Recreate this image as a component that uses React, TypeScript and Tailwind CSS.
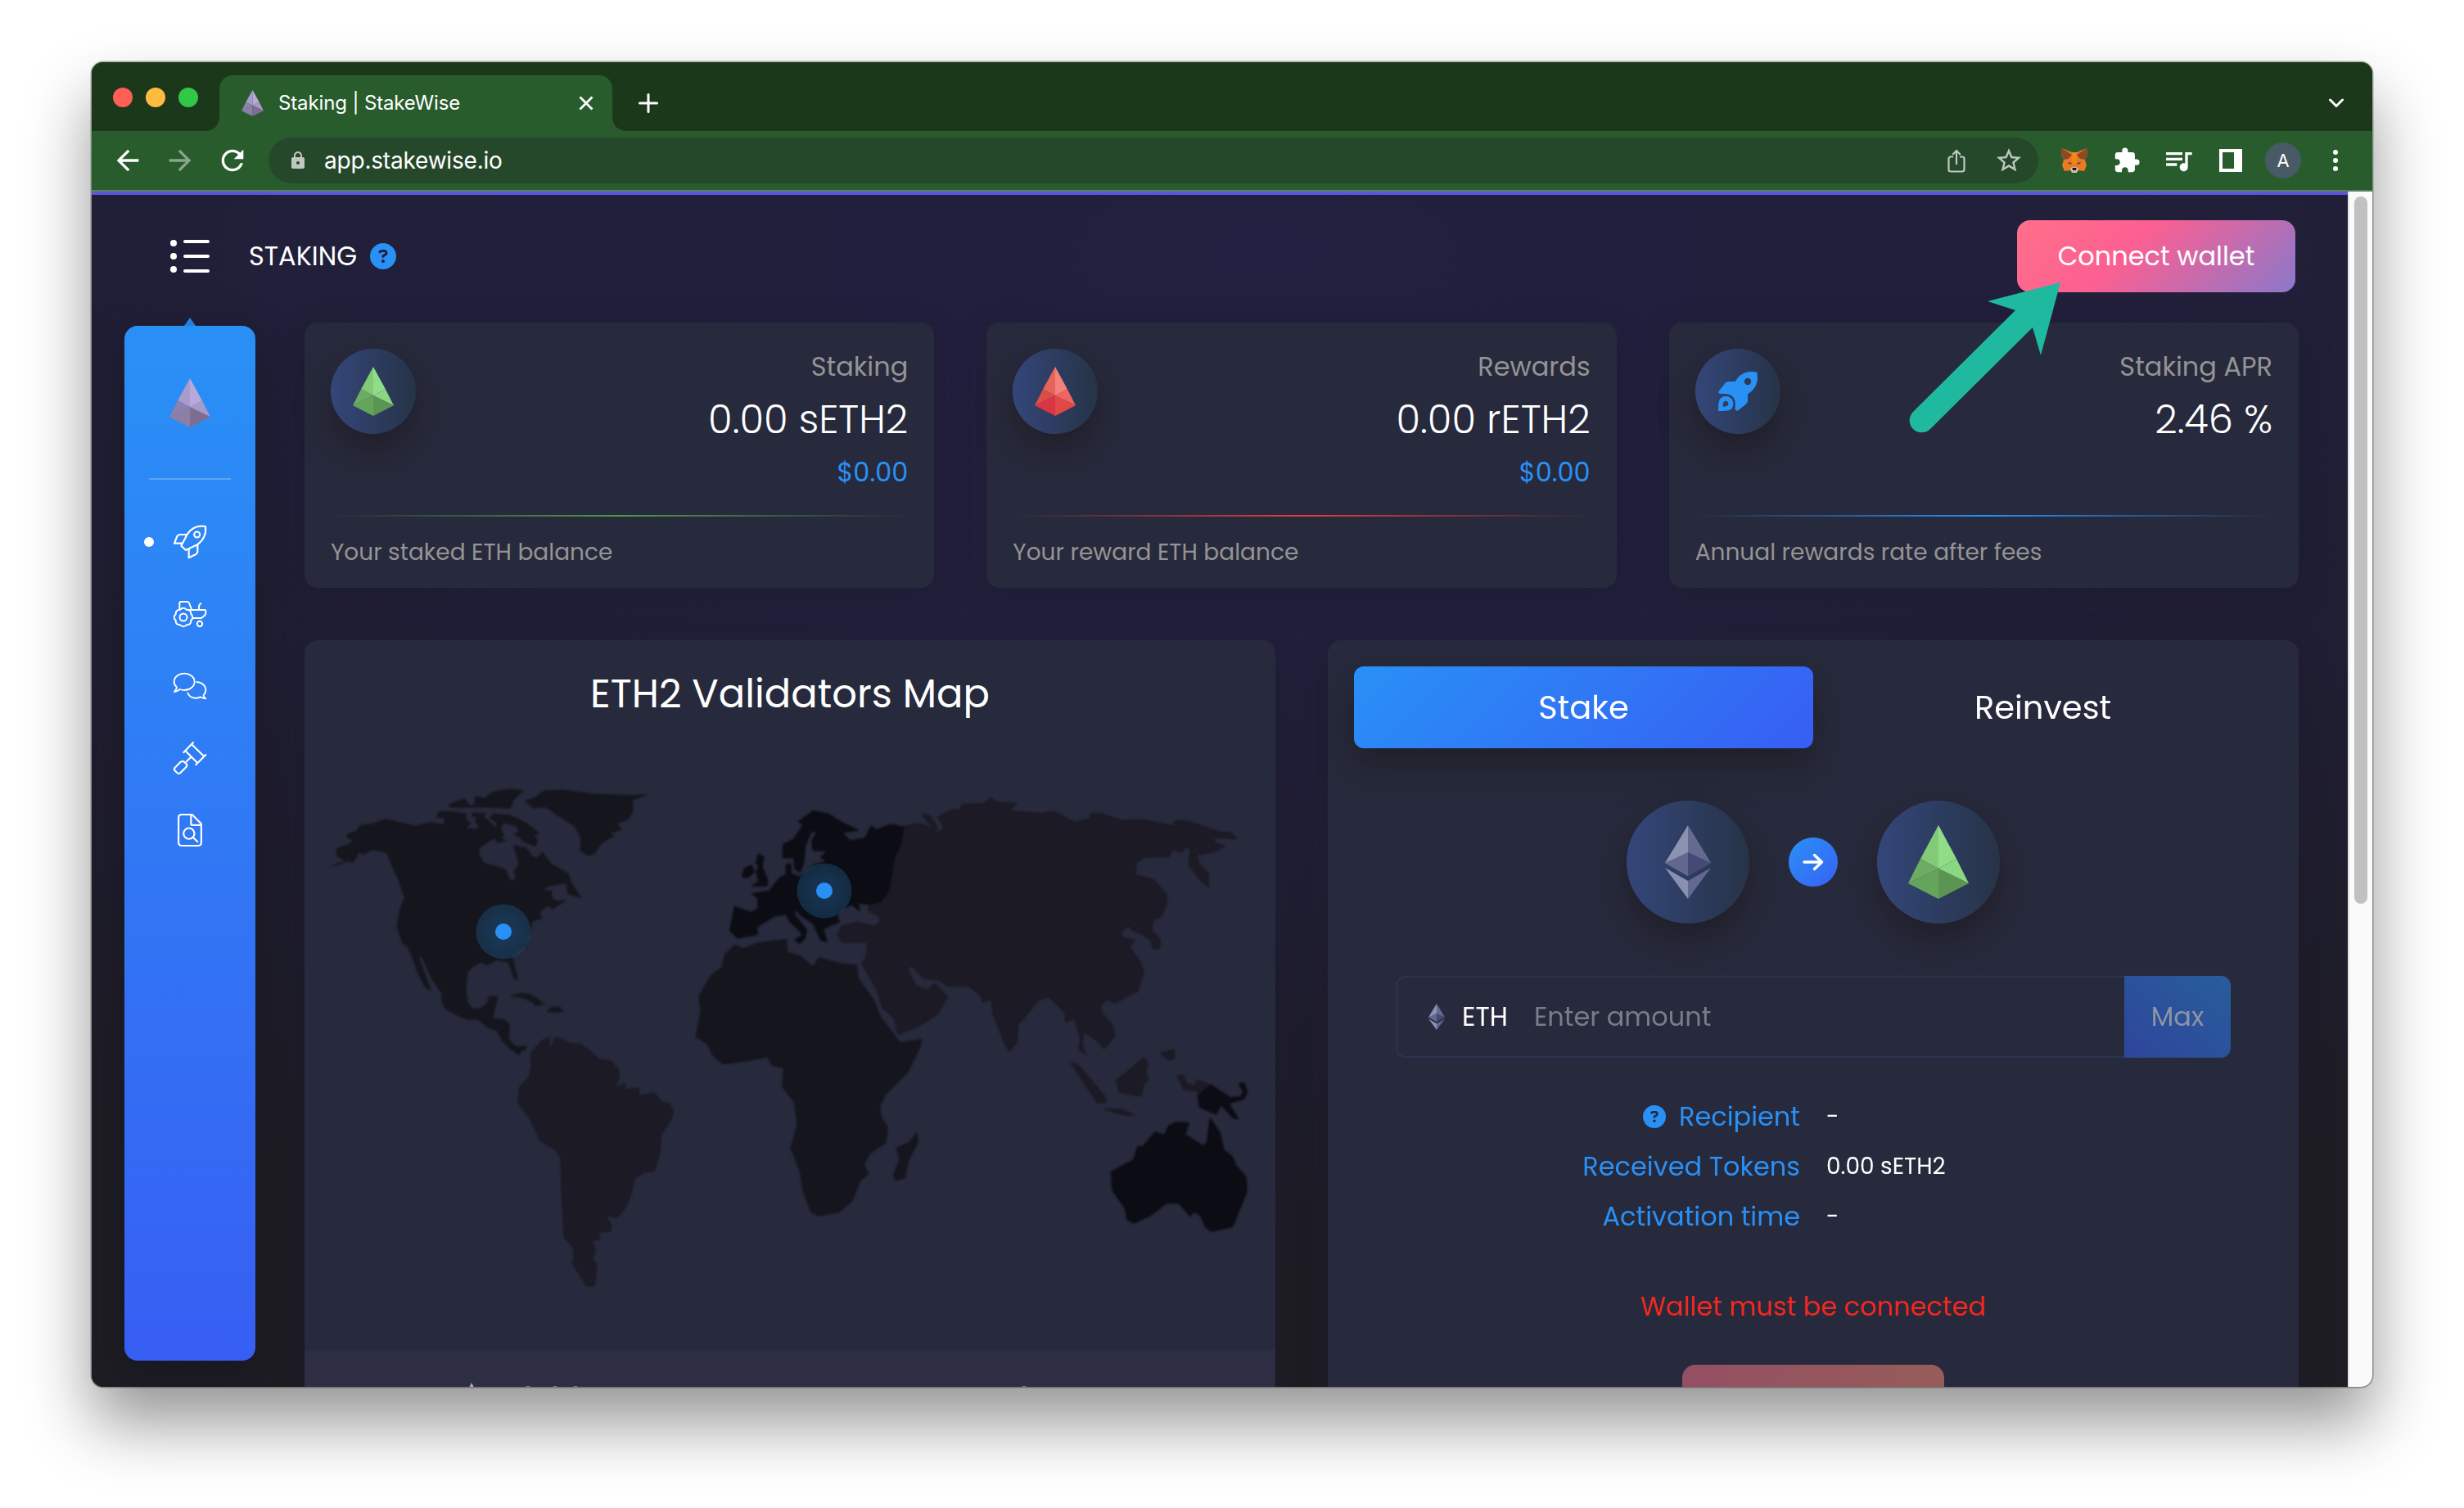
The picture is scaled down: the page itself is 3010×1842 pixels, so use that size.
import React from 'react';
import { MdArrowBack, MdArrowForward, MdExtension, MdLock, MdQueueMusic, MdRefresh, MdStarBorder } from 'react-icons/md';
import { FaCircleQuestion } from 'react-icons/fa6';

type Palette = { ul: string; ur: string; l: string; r: string; bl: string; br: string };

const GREEN: Palette = { ul: '#82ca77', ur: '#90dd88', l: '#6dad63', r: '#8ad681', bl: '#65a45b', br: '#5c9553' };
const RED: Palette = { ul: '#e5655b', ur: '#f4827a', l: '#dc4d4a', r: '#f16561', bl: '#d93542', br: '#e24847' };
const PURPLE: Palette = { ul: '#a89ccc', ur: '#b8a9da', l: '#8d82ad', r: '#a999c6', bl: '#8c7fa3', br: '#7d6d92' };

function Pyramid({ colors, className }: { colors: Palette; className: string }) {
  return (
    <svg viewBox="0 0 74 90" preserveAspectRatio="none" className={className} aria-hidden="true">
      <polygon points="37,0 15,41 37,53" fill={colors.ul} />
      <polygon points="37,0 59,41 37,53" fill={colors.ur} />
      <polygon points="15,41 0,71 37,53" fill={colors.l} />
      <polygon points="59,41 74,71 37,53" fill={colors.r} />
      <polygon points="0,71 37,90 37,53" fill={colors.bl} />
      <polygon points="74,71 37,90 37,53" fill={colors.br} />
    </svg>
  );
}

function EthLogo({ className }: { className: string }) {
  return (
    <svg viewBox="0 0 56 90" className={className} aria-hidden="true">
      <polygon points="28,0 0,46 28,62" fill="#8c92b1" />
      <polygon points="28,0 56,46 28,62" fill="#666a90" />
      <polygon points="28,33 0,46 28,62" fill="#62678f" />
      <polygon points="28,33 56,46 28,62" fill="#454a75" />
      <polygon points="0,52 28,68 28,90" fill="#8a90b0" />
      <polygon points="56,52 28,68 28,90" fill="#62688f" />
    </svg>
  );
}

function RocketSolid() {
  return (
    <svg viewBox="0 0 48 48" className="size-12 fill-[#2990f6]" fillRule="evenodd" aria-hidden="true">
      <path d="M46.500 .6C34-1.500 26 3 20.700 12H12.500Q9.500 12 8 14.500L.5 24Q-.5 27 2.500 27H9Q20.500 28 20.700 39V45.500Q21 48.500 24 47.500L33.500 40Q36 38.500 36 35.500V27.500C45 21.500 49.500 14 47.400 1.500Q47.300 .8 46.500 .6ZM36 7.800A4.200 4.200 0 1 1 36 16.200A4.200 4.200 0 1 1 36 7.800Z" />
      <path d="M0 48C0 40 .5 34.500 3.500 32C8 28.500 14 30 17 34C19 38 18.500 43 16 45.500C13 48 7 48 0 48ZM5.500 42.700C9 42.800 11 42.300 12 41C13 39 12.300 37 10.500 36C8.500 35.300 6.800 36 6.200 38C5.700 39.500 5.500 41 5.500 42.700Z" />
    </svg>
  );
}

function Fox() {
  return (
    <svg viewBox="0 0 32 30" className="h-[30px] w-8" aria-hidden="true">
      <polygon points="1,0 13,5 19,5 31,0 32,9 29,14 31,21 28,28 21,27 18,30 14,30 11,27 4,28 1,21 3,14 0,9" fill="#e87a24" />
      <polygon points="1,0 13,8 9,13 3,14 0,9" fill="#8c4a24" />
      <polygon points="31,0 19,8 23,13 29,14 32,9" fill="#8c4a24" />
      <polygon points="13,5 19,5 18,19 14,19" fill="#f6851b" />
      <polygon points="8,17 13,18 12,20 9,19" fill="#6a4632" />
      <polygon points="24,17 19,18 20,20 23,19" fill="#6a4632" />
      <polygon points="11,25 14,23 18,23 21,25 19,30 13,30" fill="#d5bfb2" />
      <polygon points="13.500,24 18.500,24 18,27 14,27" fill="#161616" />
    </svg>
  );
}

function ShareIcon() {
  return (
    <svg viewBox="0 0 22 29" className="h-[29px] w-[22px]" fill="none" stroke="#bfc8c0" strokeWidth="2.2" aria-hidden="true">
      <path d="M7 9.500H4a2.500 2.500 0 0 0-2.500 2.500v13A2.500 2.500 0 0 0 4 27.500h14a2.500 2.500 0 0 0 2.500-2.500V12A2.500 2.500 0 0 0 18 9.500h-3" />
      <path d="M11 19V2.500M6.200 7 11 2l4.800 5" />
    </svg>
  );
}

const navIcon = 'overflow-visible fill-none stroke-white';

function RocketOutline() {
  return (
    <svg viewBox="126 66 120 120" className={`${navIcon} size-10`} strokeWidth="6.500" strokeLinejoin="round">
      <path d="M243 69C210 64 188 79 176 98L154 140l17 16 42-20C234 121 247 102 243 69Z" />
      <circle cx="212" cy="99" r="10.500" />
      <path d="M175 99h-25q-8 0-11 6l-10 26h29M182 151v33l25-12q7-4 7-11v-26" />
    </svg>
  );
}

function TractorOutline() {
  return (
    <svg viewBox="126 342 120 96" className={`${navIcon} h-8 w-10`} strokeWidth="6" strokeLinejoin="round" strokeLinecap="round">
      <path d="M148 374v-24q0-5 5-5h23q5 0 7 5l10 25M176 375h64q4 0 4 4v9q0 4-4 7l-12 10h-32M219 375v-10q0-10 7-14" />
      <circle cx="162" cy="402" r="13.500" />
      <path d="M189.700 390.500A14 14 0 0 1 189.700 413.500A14 14 0 0 1 173.500 429.700A14 14 0 0 1 150.500 429.700A14 14 0 0 1 134.300 413.500A14 14 0 0 1 134.300 390.500A14 14 0 0 1 150.500 374.300A14 14 0 0 1 173.500 374.300A14 14 0 0 1 189.700 390.500Z" />
      <circle cx="222" cy="426" r="9.500" />
    </svg>
  );
}

function ChatOutline() {
  return (
    <svg viewBox="126 606 120 96" className={`${navIcon} h-8 w-10`} strokeWidth="5.500" strokeLinejoin="round" strokeLinecap="round">
      <path d="M138 658C131 652 128 645 128 638C128 621 145 608 165.500 608C186 608 203 621 203 638C203 655 186 669 165.500 669C160 669 154 668 149 666C143 671 137 675 129 675C134 669 138 664 138 658Z" />
      <path d="M211 639C230 640 244 652 244 669C244 676 241 682 236 687C236 692 239 697 244 700C236 700 230 697 224 694C205 703 184 697 178 679" />
    </svg>
  );
}

function GavelOutline() {
  return (
    <svg viewBox="126 858 120 120" className={`${navIcon} size-10`} strokeWidth="6.500" strokeLinejoin="round" strokeLinecap="round">
      <path d="M163 897 198 861M208 942l36-36M169 891l45 45M192 867l46 45M190 914l-17 17" />
      <path d="M151 933l-20 20q-5 6 0 11l8 8q6 5 12 0l21-21q6-6 1-12l-9-8q-6-4-13 2Z" />
    </svg>
  );
}

function DocSearchOutline() {
  return (
    <svg viewBox="141 1121 90 121" className={`${navIcon} h-10 w-[30px]`} strokeWidth="6.500" strokeLinejoin="round" strokeLinecap="round">
      <path d="M156 1124h38l34 34v69q0 12-12 12h-60q-12 0-12-12v-91q0-12 12-12ZM190 1125v33q0 5 5 5h32" />
      <circle cx="182.500" cy="1194" r="20" />
      <path d="m197 1208 17 16" />
    </svg>
  );
}

function BrowserChrome() {
  return (
    <header className="font-['Inter',sans-serif] text-white">
      <div className="flex h-[84px] bg-[#1b381b]">
        <div className="flex w-[156px] gap-4 pt-[31px] pl-[26px]">
          <span className="size-6 rounded-full bg-[#fe5f57]" />
          <span className="size-6 rounded-full bg-[#febb40]" />
          <span className="size-6 rounded-full bg-[#33c748]" />
        </div>
        <div className="relative mt-4 flex h-[68px] w-[480px] items-center rounded-t-2xl bg-[#295c2c] pl-[27px]">
          <span className="absolute bottom-0 -left-4 size-4 bg-[radial-gradient(circle_at_0_0,transparent_15.5px,#295c2c_16px)]" />
          <span className="absolute -right-4 bottom-0 size-4 bg-[radial-gradient(circle_at_100%_0,transparent_15.5px,#295c2c_16px)]" />
          <Pyramid colors={PURPLE} className="h-8 w-[27px]" />
          <span className="ml-[18px] text-2xl tracking-[-0.13px]">Staking | StakeWise</span>
          <svg viewBox="0 0 18 18" className="mr-[23px] ml-auto size-[18px] fill-none stroke-white" strokeWidth="2.800">
            <path d="m1.500 1.500 15 15m0-15-15 15" />
          </svg>
        </div>
        <svg viewBox="0 0 24 24" className="mt-[38px] ml-8 size-6 fill-none stroke-white" strokeWidth="3" strokeLinecap="round">
          <path d="M12 1.500v21M1.500 12h21" />
        </svg>
        <svg viewBox="0 0 18 12" className="mt-11 mr-[35px] ml-auto h-3 w-[18px] fill-none stroke-white" strokeWidth="3" strokeLinecap="round">
          <path d="m1.500 2 7.500 7.500L16.500 2" />
        </svg>
      </div>
      <div className="flex h-[72px] items-center bg-[#295c2c]">
        <MdArrowBack className="ml-6 size-10" />
        <MdArrowForward className="ml-6 size-10 opacity-45" />
        <MdRefresh className="ml-6 size-10" />
        <div className="ml-6 flex h-14 w-[2162px] items-center rounded-full bg-[#26482a] pl-6 text-[#bfc8c0]">
          <MdLock className="size-6" />
          <span className="ml-5 text-[28px] tracking-[-0.2px] text-white">app.stakewise.io</span>
          <span className="ml-auto">
            <ShareIcon />
          </span>
          <MdStarBorder className="mr-[18px] ml-[35px] size-[36px]" />
        </div>
        <span className="ml-7">
          <Fox />
        </span>
        <MdExtension className="ml-[31px] size-[34px]" />
        <MdQueueMusic className="ml-[26px] size-10" />
        <span className="ml-[30px] box-border h-7 w-7 border-4 border-r-10 border-white" />
        <span className="ml-7 flex size-11 items-center justify-center rounded-full bg-[#485a65] text-[22px]">A</span>
        <svg viewBox="0 0 6 28" className="ml-[39px] h-7 w-1.5 fill-white">
          <circle cx="3" cy="4" r="3" />
          <circle cx="3" cy="14" r="3" />
          <circle cx="3" cy="24" r="3" />
        </svg>
      </div>
      <div className="h-0.5 bg-[#5c815e]" />
    </header>
  );
}

const NAV = [
  { icon: <RocketOutline />, active: true },
  { icon: <TractorOutline />, active: false },
  { icon: <ChatOutline />, active: false },
  { icon: <GavelOutline />, active: false },
  { icon: <DocSearchOutline />, active: false },
];

function Sidebar() {
  return (
    <aside className="relative mt-1 ml-10 flex h-[1264px] w-40 shrink-0 flex-col items-center rounded-2xl bg-linear-to-b from-[#2990f6] to-[#375ef3] shadow-[0_20px_50px_rgba(20,18,28,0.55)]">
      <span className="absolute -top-2.5 left-[73px] h-2.5 w-3.5 bg-[#2580e0] [clip-path:polygon(50%_0,100%_100%,0_100%)]" />
      <Pyramid colors={PURPLE} className="mt-16 h-[60px] w-[50px]" />
      <span className="mt-[62px] h-0.5 w-[100px] bg-white/25" />
      <nav className="mt-8 flex w-full flex-col">
        {NAV.map((item, i) => (
          <a key={i} className="relative flex h-[88px] items-center justify-center">
            {item.active && <span className="absolute left-6 size-3 rounded-full bg-white" />}
            {item.icon}
          </a>
        ))}
      </nav>
    </aside>
  );
}

const orb =
  'flex shrink-0 items-center justify-center rounded-full bg-linear-to-r from-[#34467a] to-[#263347] shadow-[0_20px_40px_rgba(31,27,36,0.8)]';

function StatCard(props: { icon: React.ReactNode; title: string; value: string; usd?: string; caption: string; rule: string }) {
  return (
    <section className="h-[324px] rounded-2xl bg-[#272a3c] px-8 pt-8 shadow-[0_10px_40px_rgba(25,20,35,0.25)]">
      <div className="flex h-[172px] justify-between">
        <div className={`${orb} size-[104px]`}>{props.icon}</div>
        <div className="text-right">
          <p className="text-[32px] leading-[44px] text-[#949494]">{props.title}</p>
          <p className="text-5xl leading-[86px] font-light text-white">{props.value}</p>
          {props.usd && <p className="text-[32px] leading-[42px] text-[#2990f6]">{props.usd}</p>}
        </div>
      </div>
      <div className={`mt-[31px] h-0.5 bg-linear-to-r from-transparent to-transparent ${props.rule}`} />
      <p className="mt-[22px] text-[28px] leading-[44px] text-[#949494]">{props.caption}</p>
    </section>
  );
}

const NORTH_AMERICA =
  'M90 778L135 760L108 745L103 720L140 705L160 690L137 680L140 668L165 660L178 640L215 635L255 618L300 630L345 642L395 630L435 638L440 612L415 610L420 592L455 592L505 600L500 615L517 632L500 650L540 652L545 640L533 625L540 612L522 605L525 597L565 598L558 612L575 625L590 645L598 655L600 630L578 612L590 600L640 605L690 632L728 665L712 675L725 690L718 708L680 692L672 680L655 670L668 660L660 640L640 635L620 628L610 650L620 672L610 685L628 690L600 697L595 680L570 695L545 715L542 738L560 770L590 778L625 790L635 820L645 832L658 820L655 795L668 772L660 735L652 708L690 718L710 748L725 752L740 732L765 770L820 805L828 835L858 885L820 872L815 835L760 845L738 862L770 865L765 885L785 900L810 895L770 925L760 910L735 930L730 945L738 955L708 965L700 1005L690 1050L645 1085L662 1165L655 1165L635 1105L600 1098L570 1115L550 1105L520 1125L508 1140L502 1200L508 1245L525 1268L550 1265L570 1250L575 1225L600 1225L585 1300L620 1303L637 1320L635 1370L655 1395L690 1395L685 1408L675 1405L668 1423L640 1400L620 1380L600 1340L575 1332L540 1300L515 1303L480 1290L440 1265L430 1240L430 1212L400 1165L368 1087L356 1087L378 1155L395 1203L378 1190L355 1140L340 1090L325 1055L308 1040L292 985L300 930L315 885L295 820L280 785L260 732L215 720L185 738L175 725L155 765L140 760Z' +
  'M450 570L500 548L512 570L530 570L535 540L560 548L590 525L640 516L680 520L650 550L640 580L560 575L460 577Z' +
  'M688 555L715 545L745 522L800 518L900 532L1015 537L1058 535L1018 550L1018 590L1005 615L970 632L982 655L945 665L960 675L920 700L900 735L880 740L858 725L860 680L840 640L790 605L750 575L712 578Z' +
  'M645 1223Q680 1205 710 1222L745 1250L720 1255Q700 1225 645 1223ZM755 1275L770 1260L790 1260L803 1272L790 1278Z';

const SOUTH_AMERICA =
  'M145 262L185 215L213 202L212 235L222 238L232 205L250 204L285 222L325 226L355 245L395 282L440 288L465 320L470 348L450 388L490 370L492 392L540 388L543 415L597 405L625 438L655 445L668 470L660 500L622 560L617 630L598 690L560 695L525 720L515 770L490 830L460 862L418 852L440 890L438 912L395 915L398 945L370 942L382 985L370 1015L388 1035L378 1112L350 1112L330 1080L297 1028L305 1010L300 970L268 935L258 750L255 640L235 612L180 580L140 495L98 440L105 385L140 345L148 300Z';

const AFRICA =
  'M122 570L145 580L180 565L255 555L258 590L290 600L325 630L340 605L400 622L437 625L440 660L480 720L500 770L550 838L605 828L600 850L570 915L510 980L497 1010L500 1040L517 1070L512 1110L470 1140L455 1170L467 1195L445 1215L425 1270L390 1300L340 1310L320 1300L300 1245L292 1190L268 1125L285 1060L277 1000L245 955L250 905L220 898L207 875L160 885L92 895L65 870L52 840L22 820L35 750L30 710L60 655L90 630L97 597Z' +
  'M592 1083L595 1110L570 1160L562 1205L540 1213L533 1200L550 1155L541 1125L575 1110Z';

const EUROPE =
  'M167 430L212 422L240 385L255 378L255 350L266 348L268 375L290 385L330 350L362 340L345 330L362 312L325 310L322 285L335 260L320 258L303 300L300 345L290 370L278 360L275 330L247 330L248 295L275 280L300 240L288 232L325 203L365 212L400 235L440 255L400 262L420 285L460 278L475 245L490 255L525 240L558 248L552 290L535 330L520 420L500 450L470 458L440 455L445 475L425 458L400 470L385 490L392 505L350 525L360 560L345 555L325 510L295 490L280 472L275 485L308 530L303 550L290 565L278 555L298 545L290 530L265 505L255 485L225 490L178 520L180 540L130 550L110 530L122 465L165 482L183 470L182 440Z' +
  'M183 322L197 330L192 355L207 395L205 408L168 408L185 395L178 370L185 355L177 345ZM165 352L172 370L155 385L142 382L148 360Z';

const ASIA =
  'M558 245L600 238L635 250L607 212L625 215L645 245L642 265L665 250L648 220L685 200L705 200L712 185L765 183L785 168L800 180L850 183L830 203L915 210L950 205L1000 235L1040 225L1045 210L1070 210L1125 230L1170 227L1255 243L1265 228L1300 233L1380 262L1405 262L1420 278L1360 275L1365 290L1390 298L1360 315L1318 322L1322 345L1348 375L1348 410L1330 395L1298 350L1302 305L1290 300L1280 315L1255 308L1245 328L1185 328L1160 345L1158 378L1205 390L1238 430L1240 455L1225 492L1205 500L1200 530L1222 555L1222 578L1205 580L1200 555L1178 540L1150 528L1142 515L1118 538L1130 552L1158 555L1142 575L1170 615L1180 645L1165 695L1140 708L1105 728L1085 718L1068 735L1070 755L1100 790L1105 820L1078 852L1060 830L1025 805L1020 840L1030 868L1013 855L1017 820L1002 770L978 780L978 755L935 710L905 722L870 770L855 785L852 835L833 860L822 840L790 755L788 718L765 725L757 705L728 682L675 682L650 665L610 660L580 625L568 635L590 680L620 695L640 675L672 712L645 760L600 790L545 813L535 770L505 740L490 690L452 622L465 595L465 562L400 562L388 540L400 518L440 508L485 520L500 505L495 490L468 475L470 458L500 450L520 420L535 330L552 290Z' +
  'M993 893L1010 897L1080 985L1082 1000L1062 1002ZM1080 1018L1125 1020L1155 1035L1130 1035ZM1180 878L1190 890L1185 920L1192 938L1180 950L1172 983L1118 972L1110 940L1135 920ZM1225 866L1258 856L1260 878L1248 885ZM1268 928L1282 925L1290 948L1312 955L1320 940L1358 955L1325 985L1322 970L1285 965Z';

const OCEANIA =
  'M1322 980L1355 953L1405 988L1432 985L1440 970L1427 950L1440 948L1448 972L1440 990L1400 1003L1425 1045L1412 1042L1380 1005L1368 1032L1325 1012Z' +
  'M1353 1045L1378 1085L1387 1130L1410 1150L1418 1172L1445 1205L1447 1245L1410 1340L1355 1353L1340 1340L1330 1312L1312 1298L1300 1310L1272 1275L1240 1275L1200 1308L1155 1330L1138 1320L1133 1290L1100 1240L1097 1190L1155 1158L1165 1122L1180 1120L1210 1082L1235 1090L1245 1065L1265 1055L1297 1057L1287 1088L1335 1120L1345 1110Z';

const EAST = 'translate(840 900) scale(0.47191 0.44643)';

function WorldMap() {
  return (
    <svg viewBox="372 920 1186 729" className="h-[729px] w-full" strokeWidth="4" strokeLinejoin="round" aria-hidden="true">
      <defs>
        <radialGradient id="pulse">
          <stop offset="0" stopColor="#1e4a78" stopOpacity="0.7" />
          <stop offset="1" stopColor="#1c496f" stopOpacity="0.5" />
        </radialGradient>
      </defs>
      <g className="blur-[0.9px]">
        <path d={NORTH_AMERICA} transform="translate(370 780) scale(0.39541 0.35714)" fill="#15161d" stroke="#15161d" />
        <path d={SOUTH_AMERICA} transform="translate(600 1200) scale(0.33333)" fill="#1c1a25" stroke="#1c1a25" />
        <path d={AFRICA} transform={EAST} fill="#15161d" stroke="#15161d" />
        <path d={ASIA} transform={EAST} fill="#1c1a25" stroke="#1c1a25" />
        <path d={EUROPE} transform={EAST} fill="#0c0d14" stroke="#0c0d14" />
        <path d={OCEANIA} transform={EAST} fill="#0c0d14" stroke="#0c0d14" />
      </g>
      <circle cx="615" cy="1138" r="33.500" fill="url(#pulse)" />
      <circle cx="615" cy="1138" r="10" fill="#2990f6" />
      <circle cx="1007" cy="1088" r="33.500" fill="url(#pulse)" />
      <circle cx="1007" cy="1088" r="10" fill="#2990f6" />
    </svg>
  );
}

function MapCard() {
  return (
    <section className="h-[980px] w-[1186px] rounded-2xl bg-[#272a3c] shadow-[0_10px_40px_rgba(25,20,35,0.25)]">
      <h2 className="h-[138px] pt-9 text-center text-5xl leading-[60px] text-white">ETH2 Validators Map</h2>
      <WorldMap />
      <div className="flex h-28 bg-[#2d2e43] pt-10">
        <Pyramid colors={PURPLE} className="ml-[186px] h-11 w-9" />
        <span className="mt-1 ml-[48px] h-1 w-1.5 rounded-full bg-[#85858f]" />
        <span className="mt-1 ml-[27px] h-1 w-1.5 rounded-full bg-[#85858f]" />
        <span className="mt-1 ml-[19px] h-1 w-1.5 rounded-full bg-[#85858f]" />
        <span className="mt-1 ml-[542px] h-1 w-1.5 rounded-full bg-[#85858f]" />
      </div>
    </section>
  );
}

function DetailRow({ label, help, children }: { label: string; help?: boolean; children: React.ReactNode }) {
  return (
    <div className="grid h-[61px] grid-cols-2 items-center">
      <span className="flex items-center justify-end pr-4 text-[32px] leading-none text-[#2990f6]">
        {help && <FaCircleQuestion className="mr-4 size-7" />}
        {label}
      </span>
      <span className="pl-4 text-[28px] leading-none text-white">{children}</span>
    </div>
  );
}

function StakeCard() {
  return (
    <section className="flex h-[980px] w-[1186px] flex-col rounded-2xl bg-[#272a3c] px-8 pt-8 shadow-[0_10px_40px_rgba(25,20,35,0.25)]">
      <div className="grid h-[100px] grid-cols-2 text-[40px] text-white">
        <button className="rounded-xl bg-[linear-gradient(135deg,#2990f6,#375ef3)] shadow-[0_20px_40px_rgba(31,29,38,0.85)]">Stake</button>
        <button>Reinvest</button>
      </div>
      <div className="mt-16 flex items-center justify-center gap-12">
        <div className={`${orb} size-[150px]`}>
          <EthLogo className="h-[90px] w-14" />
        </div>
        <span className="flex size-[60px] items-center justify-center rounded-full bg-linear-to-br from-[#2990f6] to-[#3760f3]">
          <svg viewBox="0 0 26 22" className="h-[22px] w-[26px] fill-none stroke-white" strokeWidth="3.500" strokeLinecap="round" strokeLinejoin="round">
            <path d="M2 11h21M14.500 2.500 23.500 11l-9 8.500" />
          </svg>
        </span>
        <div className={`${orb} size-[150px]`}>
          <Pyramid colors={GREEN} className="h-[90px] w-[74px]" />
        </div>
      </div>
      <div className="mx-[51px] mt-16 flex h-[100px] items-center text-[32px]">
        <div className="flex h-full flex-1 items-center rounded-l-xl border-2 border-r-0 border-[#2a3350] pl-[38px]">
          <EthLogo className="h-8 w-5" />
          <span className="ml-[21px] text-white">ETH</span>
          <span className="ml-8 text-[#7b7c87]">Enter amount</span>
        </div>
        <button className="h-full w-[130px] rounded-r-xl bg-linear-to-tr from-[#2e459b] to-[#275d9b] text-[#8f94a5]">Max</button>
      </div>
      <div className="mt-[41px]">
        <DetailRow label="Recipient" help>
          -
        </DetailRow>
        <DetailRow label="Received Tokens">0.00 sETH2</DetailRow>
        <DetailRow label="Activation time">-</DetailRow>
      </div>
      <p className="mt-14 text-center text-[32px] leading-[48px] text-[#f5271f]">Wallet must be connected</p>
      <div className="mx-auto mt-[47px] h-[88px] w-[320px] rounded-2xl bg-linear-to-r from-[#944f63] to-[#965c59]" />
    </section>
  );
}

function Page() {
  return (
    <div className="relative h-[1460px] w-[2756px] shrink-0 border-t-4 border-[#5b55e0] bg-[radial-gradient(2700px_1250px_at_52%_5%,#221f40_0%,#211f39_45%,#1e1d2a_85%,#1e1d24_100%)]">
      <div className="flex h-[150px] items-center pr-16 pl-24 text-[32px] text-white">
        <svg viewBox="0 0 48 40" className="h-10 w-12 fill-none stroke-white" strokeWidth="4" strokeLinecap="round">
          <path d="M18 2h28M18 20h28M18 38h28" />
          <g fill="#fff" stroke="none">
            <circle cx="4" cy="4" r="4" />
            <circle cx="4" cy="20" r="4" />
            <circle cx="4" cy="36" r="4" />
          </g>
        </svg>
        <h1 className="ml-12">STAKING</h1>
        <FaCircleQuestion className="ml-4 size-8 text-[#2990f6]" />
        <button className="ml-auto h-[88px] w-[340px] rounded-2xl bg-[linear-gradient(135deg,#ff7088_0%,#fc5f92_40%,#8a78cc_100%)]">
          Connect wallet
        </button>
      </div>
      <div className="flex pt-1.5">
        <Sidebar />
        <main className="ml-[60px] w-[2436px]">
          <div className="grid grid-cols-3 gap-16">
            <StatCard
              icon={<Pyramid colors={GREEN} className="h-[60px] w-[50px]" />}
              title="Staking"
              value="0.00 sETH2"
              usd="$0.00"
              caption="Your staked ETH balance"
              rule="via-[#509a45]"
            />
            <StatCard
              icon={<Pyramid colors={RED} className="h-[60px] w-[50px]" />}
              title="Rewards"
              value="0.00 rETH2"
              usd="$0.00"
              caption="Your reward ETH balance"
              rule="via-[#e83b3b]"
            />
            <StatCard
              icon={<RocketSolid />}
              title="Staking APR"
              value="2.46 %"
              caption="Annual rewards rate after fees"
              rule="via-[#2990f6]"
            />
          </div>
          <div className="mt-16 flex gap-16">
            <MapCard />
            <StakeCard />
          </div>
        </main>
      </div>
      <svg viewBox="2320 335 210 205" className="absolute top-[97px] left-[2208px] h-[205px] w-[210px]" aria-hidden="true">
        <path d="M2517 345 2428 368 2462 379 2337 503A14.500 14.500 0 0 0 2358 524L2483 400 2493 434Z" fill="#1fb9a0" />
      </svg>
    </div>
  );
}

export default function App() {
  return (
    <div className="h-[1842px] w-[3010px] overflow-hidden bg-white pt-[76px] pl-[112px] font-['Poppins',Inter,sans-serif]">
      <div className="h-[1618px] w-[2786px] rounded-[14px] shadow-[0_0_0_1.5px_rgba(0,0,0,0.3),0_44px_80px_rgba(0,0,0,0.42)]">
        <div className="h-full w-full overflow-hidden rounded-[14px] bg-[#1e1d24]">
          <BrowserChrome />
          <div className="flex h-[1460px]">
            <Page />
            <div className="w-[30px] border-l-2 border-[#e4e4e4] bg-[#fafafa] pt-1.5 pl-1.5">
              <div className="h-[864px] w-4 rounded-full bg-[#c1c1c1]" />
            </div>
          </div>
        </div>
      </div>
    </div>
  );
}
